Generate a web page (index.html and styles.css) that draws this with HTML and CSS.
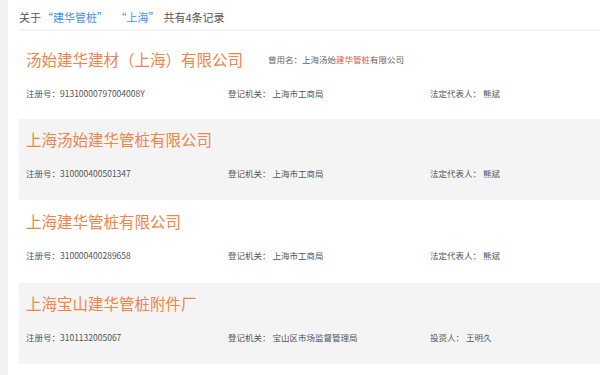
FILE: index.html
```html
<!DOCTYPE html>
<html lang="zh">
<head>
<meta charset="utf-8">
<link rel="stylesheet" href="styles.css">
</head>
<body>
<div class="side"></div>
<main class="main">
  <div class="summary">关于<span class="q">“建华管桩”</span><span class="q q2">“上海”</span>共有4条记录</div>
  <div class="list">
    <div class="card first">
      <div class="title-row"><span class="title">汤始建华建材（上海）有限公司</span><span class="former">曾用名：上海汤始<em>建华管桩</em>有限公司</span></div>
      <div class="info">
        <span class="col">注册号：91310000797004008Y</span>
        <span class="col">登记机关： 上海市工商局</span>
        <span class="col">法定代表人： 熊斌</span>
      </div>
    </div>
    <div class="card alt">
      <div class="title-row"><span class="title">上海汤始建华管桩有限公司</span></div>
      <div class="info">
        <span class="col">注册号：310000400501347</span>
        <span class="col">登记机关： 上海市工商局</span>
        <span class="col">法定代表人： 熊斌</span>
      </div>
    </div>
    <div class="card tall">
      <div class="title-row"><span class="title">上海建华管桩有限公司</span></div>
      <div class="info">
        <span class="col">注册号：310000400289658</span>
        <span class="col">登记机关： 上海市工商局</span>
        <span class="col">法定代表人： 熊斌</span>
      </div>
    </div>
    <div class="card alt">
      <div class="title-row"><span class="title">上海宝山建华管桩附件厂</span></div>
      <div class="info">
        <span class="col">注册号：3101132005067</span>
        <span class="col">登记机关： 宝山区市场监督管理局</span>
        <span class="col">投资人： 王明久</span>
      </div>
    </div>
  </div>
</main>
</body>
</html>
```
FILE: styles.css
```css
html, body {
  margin: 0;
  padding: 0;
  background: #fff;
}
body {
  display: flex;
  min-height: 375px;
  font-family: "Noto Sans CJK SC", "Noto Sans", sans-serif;
  color: #555;
}
.side {
  width: 8px;
  flex: none;
  background: #f1f1f1;
}
.main {
  flex: 1;
  padding-left: 11px;
  overflow: hidden;
}
.summary {
  height: 29px;
  line-height: 34px;
  font-size: 11px;
  color: #555;
  border-bottom: 2px solid #f4f4f4;
  white-space: nowrap;
}
.summary .q {
  color: #4a8fe3;
  margin: 0 1px;
}
.summary .q2 {
  margin-left: 12px;
  margin-right: 4px;
}
.list {
  margin-top: 8px;
}
.card {
  height: 81px;
  box-sizing: border-box;
  padding: 9px 7px 0;
}
.card.first {
  height: 80px;
}
.card.tall {
  height: 83px;
  padding-top: 10px;
}
.card.alt {
  background: #f4f4f4;
}
.title-row {
  display: flex;
  align-items: center;
  height: 22px;
  white-space: nowrap;
}
.title {
  font-size: 15.5px;
  color: #f0844a;
}
.former {
  margin-left: 25px;
  font-size: 8.5px;
  color: #666;
}
.former em {
  font-style: normal;
  color: #e2574c;
}
.info {
  display: flex;
  margin-top: 17px;
  line-height: 12px;
  font-size: 8.5px;
  color: #555;
  white-space: nowrap;
}
.col {
  width: 202px;
  flex: none;
}
```
